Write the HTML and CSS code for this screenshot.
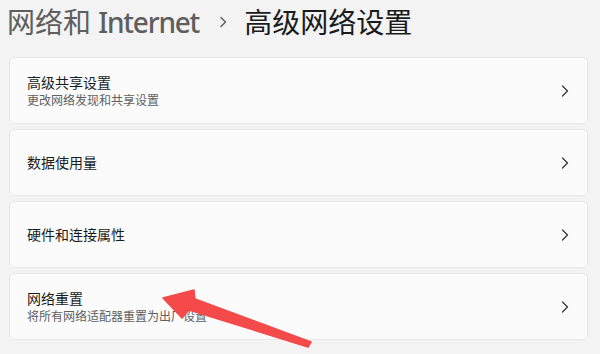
FILE: index.html
```html
<!DOCTYPE html>
<html lang="zh-CN">
<head>
<meta charset="utf-8">
<title>高级网络设置</title>
<link rel="stylesheet" href="styles.css">
</head>
<body>
<div class="page">
  <header class="crumbs">
    <span class="crumb-parent">网络和 <span class="latin">Internet</span></span>
    <svg class="crumb-sep" width="8" height="12" viewBox="0 0 8 12"><path d="M2 1.5 L6.5 6 L2 10.5" fill="none" stroke="#5c5c5c" stroke-width="1.4" stroke-linecap="round" stroke-linejoin="round"/></svg>
    <span class="crumb-current">高级网络设置</span>
  </header>
  <main class="list">
    <div class="card">
      <div class="card-text">
        <div class="card-title">高级共享设置</div>
        <div class="card-sub">更改网络发现和共享设置</div>
      </div>
      <svg class="chev" width="8" height="12" viewBox="0 0 8 12"><path d="M1.5 1 L6.5 6 L1.5 11" fill="none" stroke="#3a3a3a" stroke-width="1.3" stroke-linecap="round" stroke-linejoin="round"/></svg>
    </div>
    <div class="card">
      <div class="card-text">
        <div class="card-title">数据使用量</div>
      </div>
      <svg class="chev" width="8" height="12" viewBox="0 0 8 12"><path d="M1.5 1 L6.5 6 L1.5 11" fill="none" stroke="#3a3a3a" stroke-width="1.3" stroke-linecap="round" stroke-linejoin="round"/></svg>
    </div>
    <div class="card">
      <div class="card-text">
        <div class="card-title">硬件和连接属性</div>
      </div>
      <svg class="chev" width="8" height="12" viewBox="0 0 8 12"><path d="M1.5 1 L6.5 6 L1.5 11" fill="none" stroke="#3a3a3a" stroke-width="1.3" stroke-linecap="round" stroke-linejoin="round"/></svg>
    </div>
    <div class="card">
      <div class="card-text">
        <div class="card-title">网络重置</div>
        <div class="card-sub">将所有网络适配器重置为出厂设置</div>
      </div>
      <svg class="chev" width="8" height="12" viewBox="0 0 8 12"><path d="M1.5 1 L6.5 6 L1.5 11" fill="none" stroke="#3a3a3a" stroke-width="1.3" stroke-linecap="round" stroke-linejoin="round"/></svg>
    </div>
  </main>
  <svg class="arrow" width="600" height="354" viewBox="0 0 600 354">
    <polygon points="163,298 194,290 195,299 311,342 308,347 189,310 182,318" fill="#f44a4a" stroke="#f44a4a" stroke-width="1.5" stroke-linejoin="round"/>
  </svg>
</div>
</body>
</html>
```
FILE: styles.css
```css
* { box-sizing: border-box; }
html, body {
  margin: 0;
  padding: 0;
  background: #f3f3f3;
}
body {
  font-family: "Noto Sans", "Noto Sans CJK SC", sans-serif;
  color: #1a1a1a;
}
.page {
  position: relative;
  width: 600px;
  height: 354px;
  overflow: hidden;
}
.crumbs {
  display: flex;
  align-items: center;
  height: 44px;
  padding: 0 0 0 7px;
  font-size: 28px;
  line-height: 40px;
  white-space: nowrap;
}
.crumb-parent {
  color: #5e5e5e;
}
.crumb-parent .latin {
  font-weight: 500;
  letter-spacing: -1.2px;
}
.crumb-sep {
  margin: 0 17px 0 20px;
}
.crumb-current {
  color: #1b1b1b;
}
.list {
  display: flex;
  flex-direction: column;
  gap: 5px;
  margin: 13px 12px 0 9px;
}
.card {
  display: flex;
  align-items: center;
  height: 67px;
  padding: 0 18px 0 17px;
  background: #fbfbfb;
  border: 1px solid #e6e6e6;
  border-radius: 5px;
}
.card-text {
  flex: 1;
  display: flex;
  flex-direction: column;
  gap: 1px;
}
.card-title {
  font-size: 14px;
  line-height: 19px;
  color: #1b1b1b;
}
.card-sub {
  font-size: 12px;
  line-height: 16px;
  color: #606060;
}
.chev {
  flex: none;
}
.arrow {
  position: absolute;
  left: 0;
  top: 0;
  pointer-events: none;
}
```
